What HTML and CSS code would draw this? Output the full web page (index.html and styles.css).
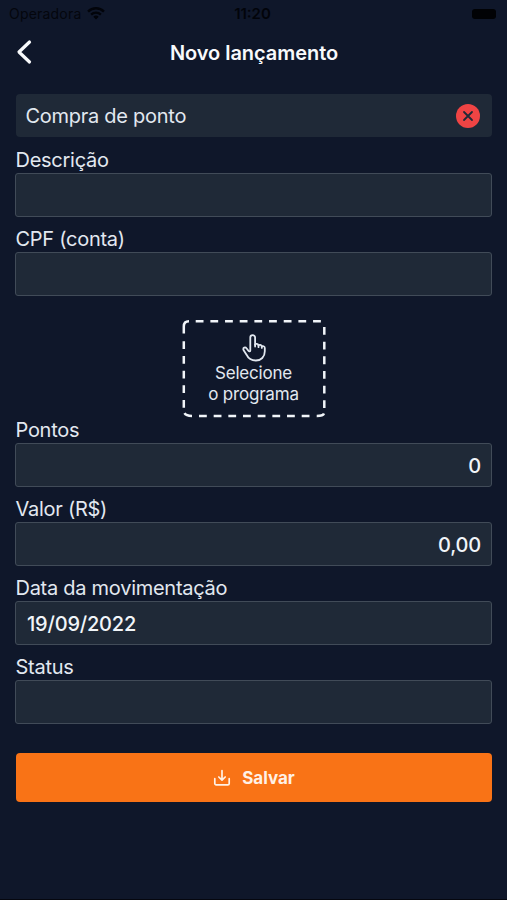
FILE: index.html
```html
<!DOCTYPE html>
<html lang="pt-BR">
<head>
<meta charset="utf-8">
<meta name="viewport" content="width=device-width, initial-scale=1">
<title>Novo lançamento</title>
<link rel="stylesheet" href="styles.css">
</head>
<body>
<div class="status-bar">
  <div class="carrier"><span class="carrier-name">Operadora</span>
    <svg class="wifi" viewBox="0 0 18 13"><path d="M9 12.6 6.3 9.8a3.9 3.9 0 0 1 5.4 0zM3.3 6.8a8.2 8.2 0 0 1 11.4 0l-1.6 1.6a5.9 5.9 0 0 0-8.2 0zM.2 3.7a12.6 12.6 0 0 1 17.6 0l-1.7 1.7a10.2 10.2 0 0 0-14.2 0z"/></svg>
  </div>
  <span class="clock">11:20</span>
  <div class="battery"></div>
</div>
<header class="header">
  <button class="back" aria-label="Voltar"><svg viewBox="0 0 18 26"><path d="M14.500 3 4 13l10.500 10"/></svg></button>
  <h1 class="title">Novo lançamento</h1>
</header>
<main class="form">
  <div class="chosen"><span class="chosen-text">Compra de ponto</span>
    <button class="clear" aria-label="Limpar"><svg viewBox="0 0 12 12"><path d="m2 2 8 8m0-8-8 8"/></svg></button>
  </div>
  <label class="field"><span class="label">Descrição</span><span class="input"></span></label>
  <label class="field"><span class="label">CPF (conta)</span><span class="input"></span></label>
  <div class="program">
    <svg class="outline" viewBox="0 0 144 98">
      <path d="M1.800 13.500V6.500q0-5.200 5.200-5.200"/>
      <path stroke-dasharray="7.8 6.870" d="M13.700 1.300H139"/>
      <path stroke-dasharray="7.8 6.870" d="M142.300 7V88"/>
      <path d="M142 93.500q-1 2.500-7.300 2.500"/>
      <path stroke-dasharray="7.8 6.870" d="M17 96H128"/>
      <path d="M2.500 93.200q1.500 2.800 7.500 2.800"/>
      <path stroke-dasharray="7.8 6.870" d="M1.800 21.300V88"/>
    </svg>
    <svg class="hand" viewBox="0 0 24 28"><path d="M8.300 16.500V3.500a2.400 2.400 0 0 1 4.800 0v7.200c.6-1.300 3.200-1 3.400.9.700-1.200 3-.8 3.300.9.800-.8 3-.4 3 1.600v3.200c0 5.600-3.700 9.200-8.900 9.200-4.700 0-7.500-1.700-9.200-5.600L1.500 16c-.8-2.400 1.700-3.500 3.200-1.500l1.700 2.300c.8 1 1.900.7 1.900-.3"/><path d="M13.100 10.700v1.800M16.500 11.600v1.600M19.800 12.500v1.400"/></svg>
    <span>Selecione</span><span>o programa</span>
  </div>
  <label class="field"><span class="label">Pontos</span><span class="input number">0</span></label>
  <label class="field"><span class="label">Valor (R$)</span><span class="input number">0,00</span></label>
  <label class="field"><span class="label">Data da movimentação</span><span class="input">19/09/2022</span></label>
  <label class="field"><span class="label">Status</span><span class="input"></span></label>
  <button class="save"><svg viewBox="0 0 18 18"><path d="M1.800 9.700v4.700a1.400 1.400 0 0 0 1.400 1.400h11.600a1.400 1.400 0 0 0 1.400-1.400V9.700M9 1.500v9.400M5.800 8 9 11.200 12.200 8"/></svg><span>Salvar</span></button>
</main>
</body>
</html>
```
FILE: styles.css
```css
* { box-sizing: border-box; }
body {
  margin: 0;
  height: 900px;
  overflow: hidden;
  background: #0f172a;
  border-bottom: 1px solid #05070f;
  color: #e2e8f0;
  font-family: Inter, "Liberation Sans", sans-serif;
}
button { border: 0; padding: 0; background: none; font: inherit; color: inherit; }
svg { display: block; fill: none; stroke: currentColor; stroke-linecap: round; stroke-linejoin: round; }
.status-bar {
  display: grid;
  grid-template-columns: 1fr auto 1fr;
  align-items: center;
  height: 27px;
  padding: 0 11px 0 9px;
  color: #02040a;
  font-size: 14px;
}
.carrier { display: flex; align-items: center; gap: 6px; }
.carrier-name { letter-spacing: 0.2px; color: #04060d; }
.wifi { width: 18px; height: 13px; fill: currentColor; stroke: none; }
.clock { font-weight: 600; font-size: 15px; }
.battery { justify-self: end; width: 24px; height: 10px; border-radius: 3px; background: #010205; }
.header { display: grid; grid-template-columns: 34px 1fr 34px; align-items: center; height: 50px; padding: 0 14px 0 15px; color: #f8fafc; }
.back svg { width: 18px; height: 26px; stroke-width: 3.200; }
.title { margin: 0; padding-top: 1px; text-align: center; font-size: 20px; font-weight: 600; letter-spacing: -0.05px; }
.form { padding: 17px 15px 0; }
.chosen {
  display: flex;
  align-items: center;
  justify-content: space-between;
  height: 43px;
  margin-left: 1px;
  padding: 0 12px 0 9.500px;
  border-radius: 4px;
  background: #1f2937;
  font-size: 20px;
  letter-spacing: -0.270px;
}
.clear { display: grid; place-items: center; width: 24px; height: 24px; border-radius: 50%; background: #ef4444; color: #1f2937; }
.clear svg { width: 12px; height: 12px; stroke-width: 1.800; }
.field { display: block; height: 79px; padding-top: 9px; font-size: 20px; }
.label { display: block; height: 26.500px; padding-left: 0.500px; line-height: 28px; letter-spacing: -0.270px; }
.program ~ .field .label { line-height: 26.500px; }
.input {
  display: flex;
  align-items: center;
  height: 44px;
  padding: 2px 10px 0 11px;
  border: 1px solid #414b58;
  border-radius: 3px;
  background: #1f2937;
  color: #f1f5f9;
  font-weight: 500;
  letter-spacing: -0.200px;
}
.number { justify-content: flex-end; }
.program {
  position: relative;
  display: flex;
  flex-direction: column;
  align-items: center;
  width: 144px;
  height: 98px;
  margin: 24.500px auto -10px;
  padding-top: 14px;
  font-size: 17px;
  line-height: 21px;
  letter-spacing: -0.200px;
}
.outline { position: absolute; inset: 0; width: 144px; height: 98px; stroke: #f1f5f9; stroke-width: 2.500; stroke-linecap: butt; }
.hand { width: 24px; height: 28px; margin-bottom: 1px; stroke-width: 1.800; }
.save {
  display: flex;
  align-items: center;
  justify-content: center;
  gap: 11px;
  width: 476px;
  height: 49px;
  margin: 29.500px 0 0 1px;
  border-radius: 4px;
  background: #f97316;
  color: #fff1e6;
  font-size: 17px;
  font-weight: 700;
}
.save svg { width: 18px; height: 18px; stroke-width: 1.700; }
```
